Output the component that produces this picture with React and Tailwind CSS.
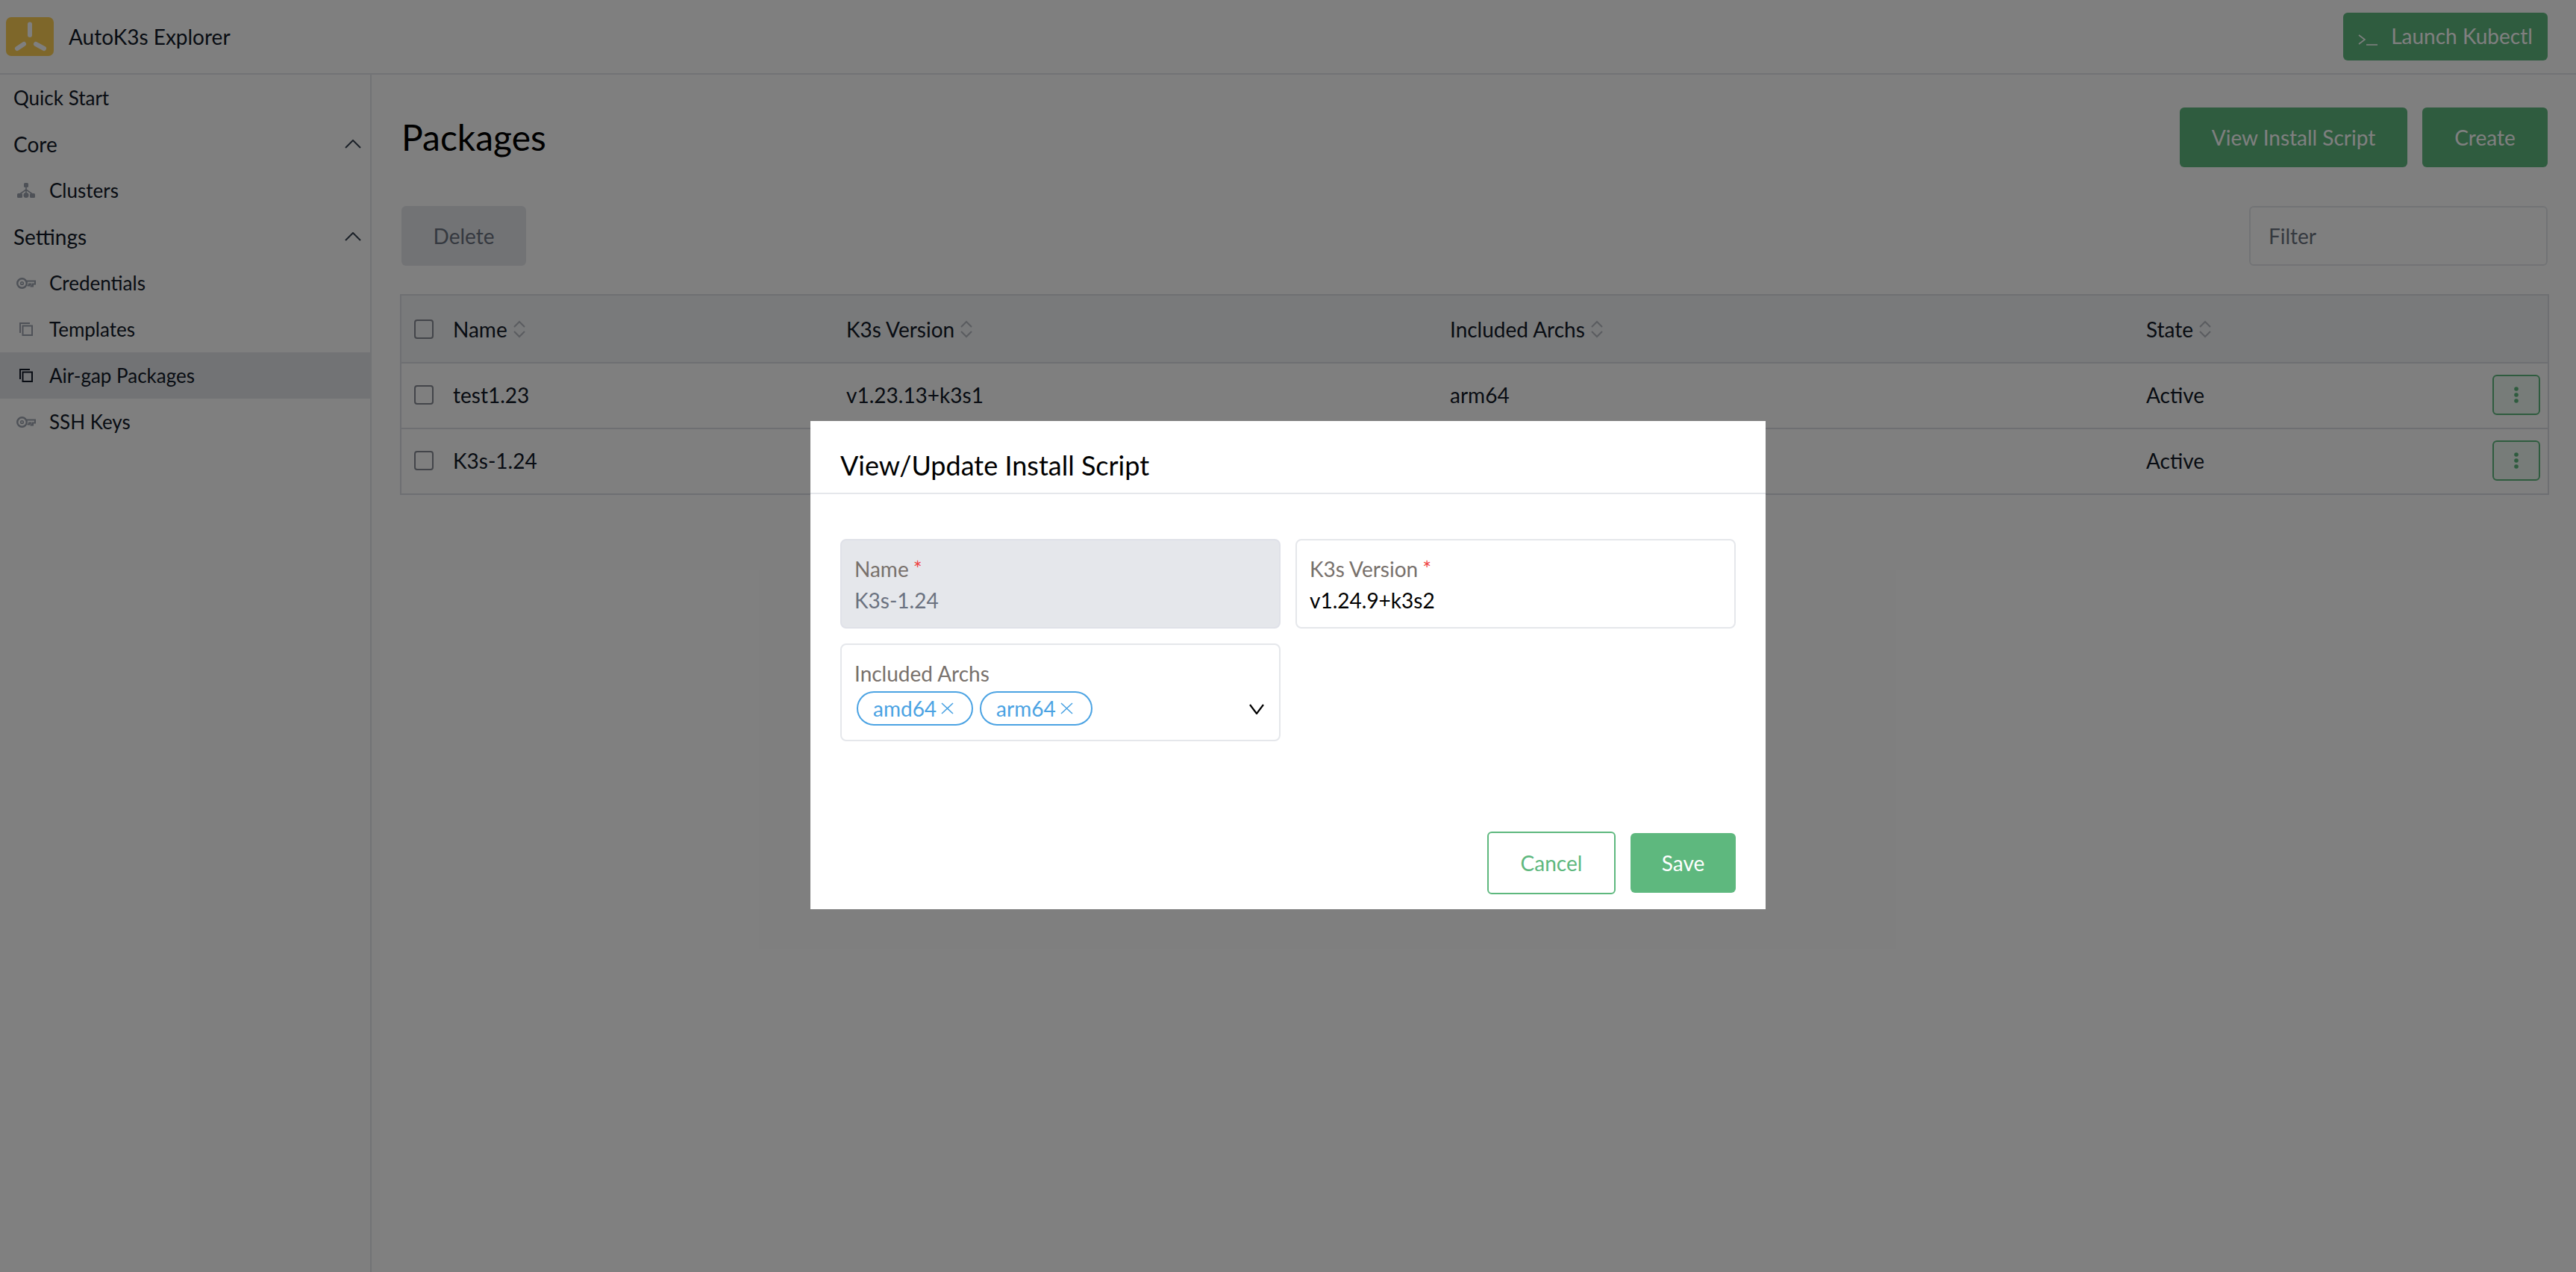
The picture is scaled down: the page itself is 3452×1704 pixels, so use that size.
import React from 'react'

const KeyIcon = () => (
  <svg width="26" height="15" viewBox="0 0 26 15" fill="none" stroke="currentColor">
    <circle cx="7.500" cy="7.500" r="6.300" strokeWidth="2.400" />
    <circle cx="7.500" cy="7.500" r="1.800" strokeWidth="1.600" />
    <path d="M13.500 4.500H25V8.500h-3v3h-2.500v-3H17v2h-2.500" strokeWidth="2" />
  </svg>
)

const CopyIcon = () => (
  <svg width="18" height="18" viewBox="0 0 18 18" fill="none" stroke="currentColor" strokeWidth="2">
    <path d="M1 14V1h13" />
    <rect x="4.500" y="4.500" width="12.500" height="12.500" />
  </svg>
)

const ClusterIcon = () => (
  <svg width="24" height="20" viewBox="0 0 24 20" fill="currentColor">
    <path d="M12 4v11M12 9l-8.500 6M12 9l8.500 6" fill="none" stroke="currentColor" strokeWidth="1.600" />
    <rect x="9" y="0" width="6" height="6" rx="1.500" />
    <rect x="0" y="14" width="7" height="6" rx="1.500" />
    <circle cx="12" cy="16.500" r="3.500" />
    <rect x="17" y="14" width="7" height="6" rx="1.500" />
  </svg>
)

const TerminalIcon = () => (
  <svg width="26" height="15" viewBox="0 0 26 15" fill="none" stroke="currentColor" strokeWidth="1.600" className="mt-[10px]">
    <path d="M1 1l8 6-8 6" />
    <path d="M11 14h15" />
  </svg>
)

const LogoMark = () => (
  <svg width="64" height="52" viewBox="0 0 64 52" className="block">
    <rect width="64" height="52" rx="7" fill="#fdcf55" />
    <g stroke="#ffffff" strokeWidth="6" strokeLinecap="round">
      <path d="M32 9.500v14.500" />
      <path d="M15 42l9-6" />
      <path d="M40 36l11 6" />
    </g>
  </svg>
)

const SortIcon = () => (
  <svg width="16" height="24" viewBox="0 0 16 24" fill="none" stroke="#b4b8c0" strokeWidth="2">
    <path d="M1 9l7-7 7 7" />
    <path d="M1 15l7 7 7-7" />
  </svg>
)

const KebabIcon = () => (
  <svg width="6" height="22" viewBox="0 0 6 22" fill="currentColor">
    <circle cx="3" cy="3" r="2.800" />
    <circle cx="3" cy="11" r="2.800" />
    <circle cx="3" cy="19" r="2.800" />
  </svg>
)

const CrossIcon = () => (
  <svg width="17" height="16" viewBox="0 0 17 16" fill="none" stroke="currentColor" strokeWidth="1.600">
    <path d="M1 1l15 14M16 1L1 15" />
  </svg>
)

const Checkbox = () => <span className="block h-[26px] w-[26px] rounded-[4px] border-2 border-[#878b94]" />

const SectionItem = ({ label }) => (
  <div className="flex h-[62px] items-center justify-between pl-[18px] pr-[12px] text-[28px]">
    <span>{label}</span>
    <svg width="22" height="12" viewBox="0 0 22 12" fill="none" stroke="#374151" strokeWidth="2">
      <path d="M1 11L11 1l10 10" />
    </svg>
  </div>
)

const NavItem = ({ label, icon, active }) => (
  <div className={`flex h-[62px] items-center text-[26px] ${active ? 'bg-[#e5e7eb]' : ''}`}>
    <span className={`flex w-[66px] justify-center pl-[4px] ${active ? 'text-[#111827]' : 'text-[#9ca3af]'}`}>{icon}</span>
    <span>{label}</span>
  </div>
)

const Sidebar = () => (
  <aside className="h-[1604px] w-[498px] shrink-0 border-r-2 border-[#e5e7eb] text-[#111827]">
    <div className="flex h-[62px] items-center pl-[18px] text-[26px]">Quick Start</div>
    <SectionItem label="Core" />
    <NavItem label="Clusters" icon={<ClusterIcon />} />
    <SectionItem label="Settings" />
    <NavItem label="Credentials" icon={<KeyIcon />} />
    <NavItem label="Templates" icon={<CopyIcon />} />
    <NavItem label="Air-gap Packages" icon={<CopyIcon />} active />
    <NavItem label="SSH Keys" icon={<KeyIcon />} />
  </aside>
)

const gridCols = 'grid grid-cols-[596px_809px_933px_1fr]'

const TableHead = ({ label }) => (
  <div className="flex items-center gap-[8px]">
    <span>{label}</span>
    <SortIcon />
  </div>
)

const TableRow = ({ name, version, archs }) => (
  <div className={`${gridCols} h-[88px] items-center border-t-2 border-[#dddfe5] pb-[2px]`}>
    <div className="flex items-center gap-[26px] pl-[17px]">
      <Checkbox />
      <span>{name}</span>
    </div>
    <span>{version}</span>
    <span>{archs}</span>
    <div className="flex items-center justify-between pr-[10px]">
      <span>Active</span>
      <button className="flex h-[54px] w-[64px] items-center justify-center rounded-[6px] border-2 border-[#5eb87e] bg-[#5eb87e]/10 text-[#5eb87e]">
        <KebabIcon />
      </button>
    </div>
  </div>
)

const Field = ({ label, value, required, disabled }) => (
  <div className={`h-[120px] rounded-[8px] border-2 px-[17px] pt-[18px] ${disabled ? 'border-[#dfe1e8] bg-[#e5e7eb]' : 'border-[#e5e7eb] bg-white'}`}>
    <div className="text-[#78716c]">
      {label}
      {required && <span className="ml-[6px] text-[#ef4444]">*</span>}
    </div>
    <div className={`mt-[2px] ${disabled ? 'text-[#6b7280]' : 'text-black'}`}>{value}</div>
  </div>
)

const Pill = ({ label }) => (
  <span className="flex h-[46px] items-center gap-[6px] rounded-full border-2 border-[#4ba3e3] pl-[20px] pr-[24px] text-[#4ba3e3]">
    {label}
    <CrossIcon />
  </span>
)

const InstallScriptModal = () => (
  <div className="absolute inset-0 z-10 bg-black/50">
    <div className="mx-auto mt-[564px] h-[654px] w-[1280px] bg-white">
      <div className="h-[98px] border-b-2 border-[#e5e7eb] pl-[40px] pt-[32px] text-[36px] leading-[54px] text-black">
        View/Update Install Script
      </div>
      <div className="px-[40px] pt-[60px] text-[28px] leading-[40px]">
        <div className="grid grid-cols-2 gap-x-[20px] gap-y-[20px]">
          <Field label="Name" value="K3s-1.24" required disabled />
          <Field label="K3s Version" value="v1.24.9+k3s2" required />
          <div className="relative h-[131px] rounded-[8px] border-2 border-[#e5e7eb] px-[17px] pt-[18px]">
            <div className="text-[#78716c]">Included Archs</div>
            <div className="ml-[3px] mt-[4px] flex gap-[9px]">
              <Pill label="amd64" />
              <Pill label="arm64" />
            </div>
            <svg width="20" height="14" viewBox="0 0 20 14" fill="none" stroke="#000000" strokeWidth="2.200" className="absolute bottom-[34px] right-[20px]">
              <path d="M1 1l9 12 9-12" />
            </svg>
          </div>
        </div>
        <div className="mt-[121px] flex items-center justify-end gap-[20px]">
          <button className="h-[84px] w-[172px] rounded-[6px] border-2 border-[#5eb87e] text-[#5eb87e]">Cancel</button>
          <button className="h-[80px] w-[141px] rounded-[6px] bg-[#5eb87e] text-white">Save</button>
        </div>
      </div>
    </div>
  </div>
)

export default function App() {
  return (
    <div className="relative h-[1704px] w-[3452px] overflow-hidden bg-white font-['Lato',sans-serif] text-[28px] text-[#111827]">
      <header className="flex h-[100px] items-center justify-between border-b-2 border-[#e5e7eb] pl-[8px] pr-[38px]">
        <div className="flex items-center gap-[20px]">
          <LogoMark />
          <span>AutoK3s Explorer</span>
        </div>
        <button className="flex h-[64px] w-[274px] items-center justify-center gap-[18px] rounded-[6px] bg-[#5eb87e] pb-[2px] text-white">
          <TerminalIcon />
          Launch Kubectl
        </button>
      </header>
      <div className="flex">
        <Sidebar />
        <main className="min-w-0 flex-1 pl-[40px] pr-[38px] pt-[44px]">
          <div className="flex h-[80px] items-center justify-between">
            <h1 className="text-[48px] text-black">Packages</h1>
            <div className="flex gap-[20px]">
              <button className="h-[80px] w-[305px] rounded-[6px] bg-[#5eb87e] text-white">View Install Script</button>
              <button className="h-[80px] w-[168px] rounded-[6px] bg-[#5eb87e] text-white">Create</button>
            </div>
          </div>
          <div className="mt-[52px] flex h-[80px] items-start justify-between">
            <button className="h-[80px] w-[167px] rounded-[6px] bg-[#e5e7eb] text-[#6b7280]">Delete</button>
            <div className="flex h-[80px] w-[400px] items-center rounded-[6px] border-2 border-[#e5e7eb] pl-[24px] text-[#6b7280]">Filter</div>
          </div>
          <div className="-mx-[2px] mt-[38px] border-2 border-[#dddfe5]">
            <div className={`${gridCols} h-[89px] items-center bg-[#f3f4f6]`}>
              <div className="flex items-center gap-[26px] pl-[17px]">
                <Checkbox />
                <TableHead label="Name" />
              </div>
              <TableHead label="K3s Version" />
              <TableHead label="Included Archs" />
              <TableHead label="State" />
            </div>
            <TableRow name="test1.23" version="v1.23.13+k3s1" archs="arm64" />
            <TableRow name="K3s-1.24" version="v1.24.9+k3s2" archs="amd64,arm64" />
          </div>
        </main>
      </div>
      <InstallScriptModal />
    </div>
  )
}
